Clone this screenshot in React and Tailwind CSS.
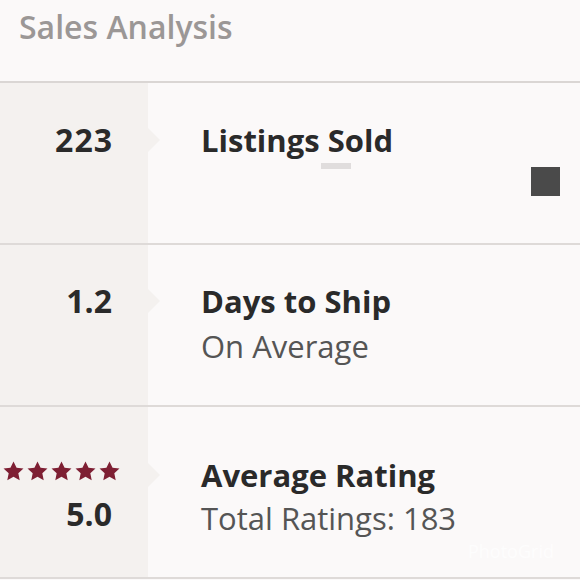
const font = { fontFamily: '"Open Sans", Lato, sans-serif' }

function Stars() {
  return (
    <div className="flex gap-[3px]">
      {[0, 1, 2, 3, 4].map(i => (
        <svg key={i} width="21" height="20" viewBox="0 0 24 22.5">
          <path d="M12 0.3l3.5 7.1 7.9.9-5.9 5.4 1.6 8L12 17.8l-7.1 3.9 1.6-8L0.6 8.3l7.9-.9z" fill="#7e1f33" />
        </svg>
      ))}
    </div>
  )
}

function Notch() {
  return (
    <div className="w-0 h-0 border-y-[12px] border-y-transparent border-l-[12px] border-l-[#f4f1ef]" />
  )
}

function Row({ height, pt, left, title, subtitle, subGap, children }) {
  return (
    <div className="flex border-b-2 border-[#dedad8]" style={{ height }}>
      <div className="w-[148px] shrink-0 bg-[#f4f1ef] flex flex-col items-end pr-[36px]" style={{ paddingTop: pt }}>
        {left}
      </div>
      <div className="flex-1 relative bg-[#fbf9f9] pl-[53px]" style={{ paddingTop: pt }}>
        <div className="absolute left-0" style={{ top: pt + 8 }}>
          <Notch />
        </div>
        <div className="text-[31px] leading-[40px] font-bold text-[#2a2a2a]">{title}</div>
        {subtitle && (
          <div className="text-[31px] leading-[40px] text-[#555]" style={{ marginTop: subGap }}>{subtitle}</div>
        )}
        {children}
      </div>
    </div>
  )
}

function Value({ children, className = '' }) {
  return (
    <div className={`text-[32px] leading-[40px] font-bold text-[#2a2a2a] ${className}`}>{children}</div>
  )
}

export default function App() {
  return (
    <div className="w-[580px] h-[580px] overflow-hidden bg-[#fbf9f9] relative" style={font}>
      <div className="h-[83px] border-b-2 border-[#dad6d4] px-[19px] pt-[7px]">
        <h1 className="text-[32px] leading-[40px] font-semibold text-[#9b9796]">Sales Analysis</h1>
      </div>

      <Row height={162} pt={37} title="Listings Sold" left={<Value className="tracking-[1px] -mr-[1px]">223</Value>}>
        <div className="mt-[3px] ml-[120px] w-[30px] h-[6px] bg-[#e0dddd]" />
        <div className="absolute right-[20px] top-[84px] w-[29px] h-[29px] bg-[#4a4a4a]" />
      </Row>

      <Row
        height={162}
        pt={36}
        title="Days to Ship"
        subtitle="On Average"
        subGap={5}
        left={<Value>1.2</Value>}
      />

      <Row
        height={172}
        pt={48}
        title="Average Rating"
        subtitle="Total Ratings: 183"
        subGap={3}
        left={
          <div className="flex flex-col items-end -mr-[8px]">
            <div className="pt-[6px]"><Stars /></div>
            <Value className="mt-[13px] mr-[8px]">5.0</Value>
          </div>
        }
      />

      <div className="absolute left-[468px] top-[538px] text-[18px] text-white/70">PhotoGrid</div>
    </div>
  )
}
